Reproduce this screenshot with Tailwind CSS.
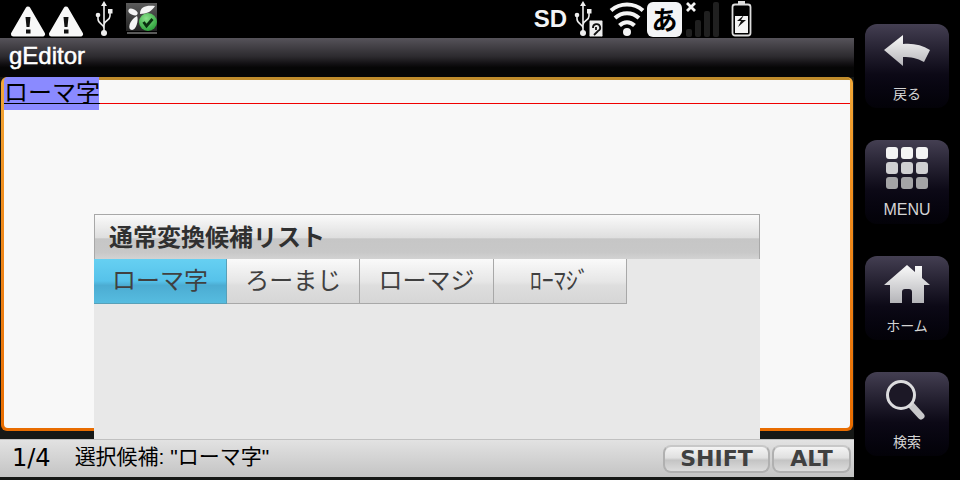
<!DOCTYPE html>
<html lang="ja">
<head>
    <meta charset="UTF-8">
    <meta name="viewport" content="width=device-width, initial-scale=1.0">
    <title>gEditor</title>
    <script src="https://cdn.jsdelivr.net/npm/@tailwindcss/browser@4"></script>
</head>
<body class="bg-black font-['Liberation_Sans','Noto_Sans_CJK_JP',sans-serif]">
    <!-- shared shapes -->
    <svg class="absolute size-0">
        <defs>
            <linearGradient id="metal" x1="0" y1="0" x2="0" y2="1">
                <stop offset="0" stop-color="#fafafa"/>
                <stop offset="1" stop-color="#b4b4b8"/>
            </linearGradient>
            <linearGradient id="tile" x1="0" y1="0" x2="0" y2="1">
                <stop offset="0" stop-color="#5c5c5c"/>
                <stop offset="1" stop-color="#222"/>
            </linearGradient>
            <radialGradient id="green" cx="0.4" cy="0.3" r="0.8">
                <stop offset="0" stop-color="#8be08b"/>
                <stop offset="1" stop-color="#209a30"/>
            </radialGradient>
            <symbol id="warn" viewBox="0 0 36 32">
                <path d="M18 4 L32.500 29 H3.500 Z" fill="#f8f8f8" stroke="#f8f8f8" stroke-width="5" stroke-linejoin="round"/>
                <path d="M15.500 12 h5 l-1 10 h-3z M16 24.500 h4.500 v4 h-4.500z" fill="#111"/>
            </symbol>
            <symbol id="usb" viewBox="0 0 20 36">
                <path d="M10 32 V4 M10 27 C10 23 4 23 4 18 V15 M10 24 C10 19 16 20 16 15 V12" fill="none" stroke="#eee" stroke-width="1.600"/>
                <path d="M10 0 l3 5 h-6z" fill="#eee"/>
                <circle cx="10" cy="32" r="3" fill="#eee"/>
                <circle cx="4" cy="14" r="2.300" fill="#eee"/>
                <path d="M14 8 h4.500 v4.500 h-4.500z" fill="#eee"/>
            </symbol>
        </defs>
    </svg>
    <div class="flex h-dvh">
        <div class="flex flex-1 flex-col bg-[#161816]">
            <header>
                <div class="flex h-[38px] items-center bg-black pl-[10px] pr-[102px]">
                    <svg class="mt-1 h-8 w-9"><use href="#warn"/></svg>
                    <svg class="mt-1 ml-0.5 h-8 w-9"><use href="#warn"/></svg>
                    <svg class="ml-[10px] h-9 w-5"><use href="#usb"/></svg>
                    <svg class="ml-3 size-8" viewBox="0 0 32 32">
                        <rect x="0" y="0" width="31" height="28" fill="url(#tile)"/>
                        <path d="M1 30h30" stroke="#777" stroke-width="1.500"/>
                        <path d="M14 11 C14 3 21 2 29 3 C26 8 21 11 14 11Z" fill="#f4f4f4"/>
                        <ellipse cx="7" cy="9" rx="5" ry="2.800" transform="rotate(28 7 9)" fill="#f4f4f4"/>
                        <path d="M11 13 C13 17 10 27 6 27 C1 27 3 17 11 13Z" fill="#f4f4f4"/>
                        <circle cx="22" cy="19" r="9" fill="url(#green)"/>
                        <path d="M17.500 19 l3 4 l6 -7" fill="none" stroke="#0a2f10" stroke-width="2.800"/>
                    </svg>
                    <span class="ml-auto text-2xl font-bold text-gray-100">SD</span>
                    <svg class="ml-1.5 h-9 w-8" viewBox="0 0 32 36">
                        <use href="#usb" x="0" y="0" width="20" height="36"/>
                        <rect x="16" y="19" width="14" height="17" rx="1.500" fill="#eee" stroke="#000"/>
                        <path d="M20 27 a3.600 3.600 0 1 1 5 3 l-4 4 M23 26 v3" fill="none" stroke="#111" stroke-width="1.800"/>
                    </svg>
                    <svg class="ml-1 h-9 w-9" viewBox="0 0 36 36">
                        <g fill="none" stroke="#f4f4f4" stroke-width="4">
                            <path d="M2 9.500 C11 1.500 25 1.500 34 9.500"/>
                            <path d="M6 17 C13 10.500 23 10.500 30 17"/>
                            <path d="M10.500 24.500 C15 20 21 20 25.500 24.500"/>
                        </g>
                        <circle cx="18" cy="31" r="4" fill="#f4f4f4"/>
                    </svg>
                    <span class="ml-0.5 flex size-[35px] items-center justify-center rounded-md bg-gray-100 pt-1 text-[26px] leading-none font-bold text-black">あ</span>
                    <svg class="ml-1 h-9 w-[34px]" viewBox="0 0 34 36">
                        <path d="M1 2 l8 8 M9 2 l-8 8" stroke="#f4f4f4" stroke-width="2.800"/>
                        <g fill="#202020">
                            <rect x="0" y="28" width="6" height="8" rx="2"/>
                            <rect x="9" y="19" width="6" height="17" rx="2"/>
                            <rect x="18" y="10" width="6" height="26" rx="2"/>
                            <rect x="27" y="1" width="6" height="35" rx="2"/>
                        </g>
                    </svg>
                    <svg class="ml-[11px] h-9 w-[21px]" viewBox="0 0 21 36">
                        <rect x="7" y="0" width="7" height="4" fill="#ddd"/>
                        <rect x="1.500" y="3.500" width="18" height="31" rx="2.500" fill="#000" stroke="#ddd" stroke-width="1.800"/>
                        <rect x="4" y="15" width="13" height="17" fill="#f4f4f4"/>
                        <path d="M13 14 L6 20 h4 L7 26 l8 -7 h-5z" fill="#111"/>
                    </svg>
                </div>
                <div class="flex h-[39px] items-center bg-[linear-gradient(#56535a,#2c2a2e_48%,#121013_66%,#060606_76%)] pb-1 pl-[9px]">
                    <h1 class="text-2xl leading-8 text-white [-webkit-text-stroke:0.5px_white]">gEditor</h1>
                </div>
            </header>
            <main class="relative flex flex-1 flex-col px-px pb-2">
                <div class="flex flex-1 rounded-md bg-linear-to-b from-[#f0a838] via-[#f09020] via-30% to-[#e86c00] p-[3px] pt-0">
                    <textarea aria-label="本文" class="flex-1 resize-none rounded-sm bg-[linear-gradient(#8a8aff,#8a8aff),linear-gradient(#f00000,#f00000),linear-gradient(#c08c2c,#c08c2c),linear-gradient(#f8f8f8,#f8f8f8)] bg-[size:95px_33px,100%_1px,100%_3px,100%_100%] bg-[position:0_0,0_26px,0_0,0_0] bg-no-repeat text-2xl leading-8 text-black underline decoration-1 underline-offset-2 outline-none">ローマ字</textarea>
                </div>
                <!-- conversion candidates -->
                <section class="absolute inset-x-0 bottom-0 mx-auto h-[225px] w-[78%] bg-[#e8e8e8]">
                    <h2 class="h-[45px] border border-b-0 border-[#a8a8a8] bg-[linear-gradient(#fafafa,#dedede_52%,#c6c6c6_54%,#c8c8c8_85%,#d2d2d2)] pl-[14px] text-2xl leading-[45px] font-bold text-[#303030]">通常変換候補リスト</h2>
                    <div class="grid grid-cols-5 text-2xl text-[#404040]">
                        <button class="h-[45px] border-r border-b border-[#58a0b8] bg-[linear-gradient(#66d0f2,#56c2ea_50%,#4cacd2_60%,#56bce0)]">ローマ字</button>
                        <button class="h-[45px] border-r border-b border-[#a8a8a8] bg-[linear-gradient(#fafafa,#e6e6e6_52%,#dedede_60%,#d6d6d6)]">ろーまじ</button>
                        <button class="h-[45px] border-r border-b border-[#a8a8a8] bg-[linear-gradient(#fafafa,#e6e6e6_52%,#dedede_60%,#d6d6d6)]">ローマジ</button>
                        <button class="h-[45px] border-r border-b border-[#a8a8a8] bg-[linear-gradient(#fafafa,#e6e6e6_52%,#dedede_60%,#d6d6d6)]">ﾛｰﾏｼﾞ</button>
                    </div>
                </section>
            </main>
            <footer class="mb-[3px] flex h-[38px] items-center border-t border-[#c0c0c0] bg-linear-to-b from-[#e2e2e2] to-[#c4c4c4] pr-[3px] pl-3 text-[21px] text-black">
                <span class="pb-0.5 font-['DejaVu_Sans',sans-serif] text-2xl">1/4</span>
                <span class="ml-6 pb-1">選択候補: "ローマ字"</span>
                <div class="ml-auto flex gap-0.5 font-['DejaVu_Sans',sans-serif] text-[22px] font-bold text-[#404040]">
                    <button class="h-7 w-[107px] rounded-lg border-2 border-[#b0b0b0] border-t-[#c8c8c8] bg-[linear-gradient(#f4f4f4,#e0e0e0_45%,#c4c4c4_55%,#dcdcdc)] leading-6">SHIFT</button>
                    <button class="h-7 w-[79px] rounded-lg border-2 border-[#b0b0b0] border-t-[#c8c8c8] bg-[linear-gradient(#f4f4f4,#e0e0e0_45%,#c4c4c4_55%,#dcdcdc)] leading-6">ALT</button>
                </div>
            </footer>
        </div>
        <nav class="flex w-[106px] flex-col items-center gap-8 pt-6 text-sm text-[#d4d4d4]">
            <button class="flex size-[84px] flex-col items-center rounded-xl bg-linear-to-b from-[#443f52] via-[#0c0916] via-60% to-[#030208]">
                <svg class="mt-1 h-14 w-12" viewBox="0 0 48 56">
                    <path d="M1 22 L20 7 V16 C30 15 39 17 47 22 L41 34 C34 30 28 29 20 29 V38 Z" fill="url(#metal)"/>
                </svg>
                <span>戻る</span>
            </button>
            <button class="flex size-[84px] flex-col items-center rounded-xl bg-linear-to-b from-[#443f52] via-[#0c0916] via-60% to-[#030208]">
                <svg class="mt-1 h-14 w-12" viewBox="0 0 48 56">
                    <g fill="#f4f4f4">
                        <rect x="3" y="3" width="12" height="12" rx="3"/><rect x="18" y="3" width="12" height="12" rx="3"/><rect x="33" y="3" width="12" height="12" rx="3"/>
                    </g>
                    <g fill="#d0d0d2">
                        <rect x="3" y="18" width="12" height="12" rx="3"/><rect x="18" y="18" width="12" height="12" rx="3"/><rect x="33" y="18" width="12" height="12" rx="3"/>
                    </g>
                    <g fill="#a4a4a6">
                        <rect x="3" y="33" width="12" height="12" rx="3"/><rect x="18" y="33" width="12" height="12" rx="3"/><rect x="33" y="33" width="12" height="12" rx="3"/>
                    </g>
                </svg>
                <span class="text-base leading-5">MENU</span>
            </button>
            <button class="flex size-[84px] flex-col items-center rounded-xl bg-linear-to-b from-[#443f52] via-[#0c0916] via-60% to-[#030208]">
                <svg class="mt-1 h-14 w-12" viewBox="0 0 48 56">
                    <path d="M24 5 L32 12 V6 H39 V18 L47 25 H41 V43 H29 V32 Q29 29 26 29 H22 Q19 29 19 32 V43 H7 V25 H1 Z" fill="url(#metal)"/>
                </svg>
                <span>ホーム</span>
            </button>
            <button class="flex size-[84px] flex-col items-center rounded-xl bg-linear-to-b from-[#443f52] via-[#0c0916] via-60% to-[#030208]">
                <svg class="mt-1 h-14 w-12" viewBox="0 0 48 56">
                    <path d="M28 29 L38 40" stroke="#c8c8ca" stroke-width="7" stroke-linecap="round"/>
                    <circle cx="18" cy="19" r="13.500" fill="#1c1826" stroke="#dcdcde" stroke-width="3"/>
                </svg>
                <span>検索</span>
            </button>
        </nav>
    </div>
</body>
</html>
